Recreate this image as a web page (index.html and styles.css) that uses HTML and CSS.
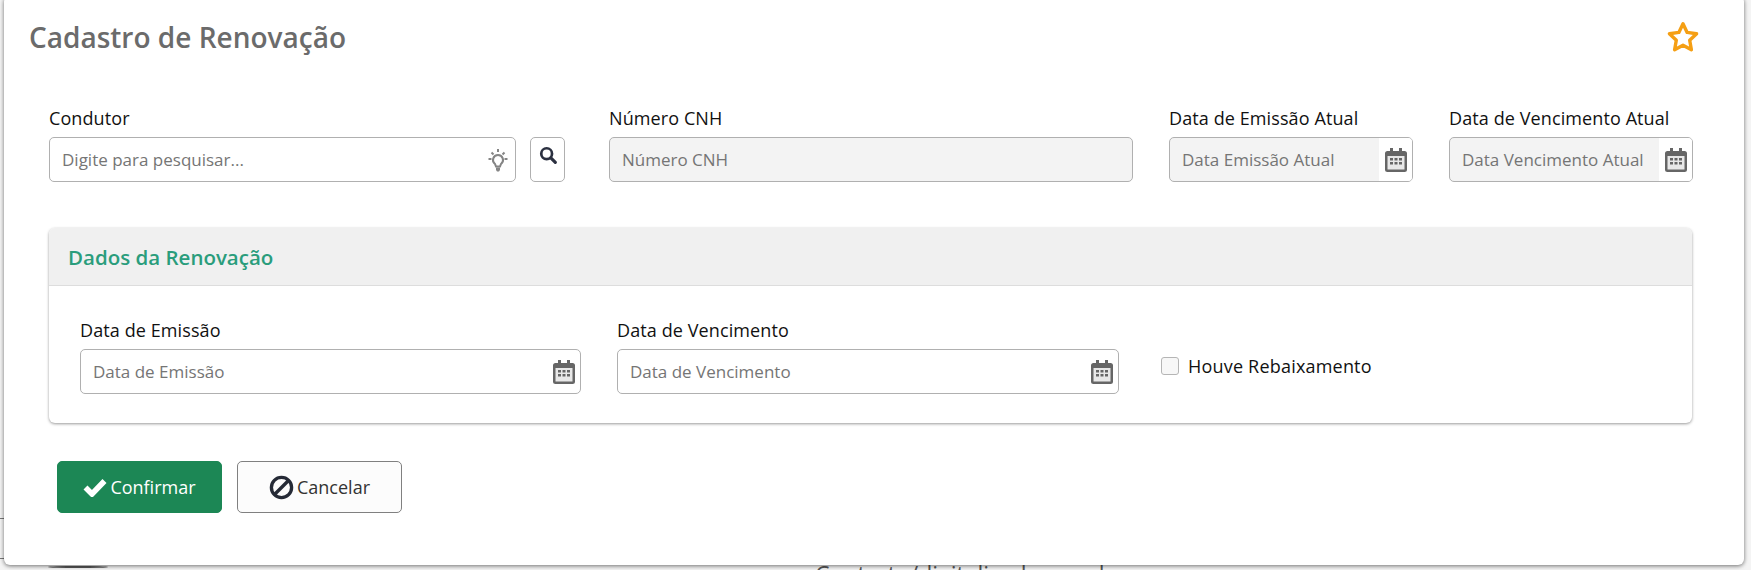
FILE: index.html
```html
<!DOCTYPE html>
<html lang="pt-BR">
<head>
<meta charset="utf-8">
<title>Cadastro de Renovação</title>
<link rel="stylesheet" href="styles.css">
</head>
<body>
<div class="backdrop">Contrato/digitalizado.com.br</div>
<span class="mark mark-a"></span>
<span class="mark mark-b"></span>
<span class="mark mark-c"></span>
<main class="modal">
  <header class="modal-head">
    <h1 class="modal-title">Cadastro de Renovação</h1>
    <svg class="star" viewBox="0 0 32 32"><path d="M16 3.500l3.900 8.200 8.900 1.200-6.500 6.200 1.600 8.900-7.900-4.300-7.900 4.300 1.600-8.900-6.500-6.200 8.900-1.200z" fill="none" stroke="#f59f14" stroke-width="3.200" stroke-linejoin="round"/></svg>
  </header>
  <section class="top-row">
    <div class="field f-cond">
      <label class="label">Condutor</label>
      <div class="cond-line">
        <div class="input grow">
          <span class="ph">Digite para pesquisar...</span>
          <svg class="bulb" viewBox="0 0 24 24"><g fill="none" stroke="#858585" stroke-width="2"><path d="M12 7a5 5 0 0 0-3 9l1 2.500h4l1-2.500a5 5 0 0 0-3-9z"/><path d="M12 1v3M2.500 11h3M18.500 11h3M5.500 4.500l2 2M18.500 4.500l-2 2"/></g><path d="M10 19.500h4V22l-1 1.500h-2L10 22z" fill="#858585"/></svg>
        </div>
        <button class="search-btn" type="button"><svg viewBox="0 0 16 16"><circle cx="6.800" cy="6.800" r="4.800" fill="none" stroke="#2b3040" stroke-width="2.400"/><path d="M10.500 10.500l4 4" stroke="#2b3040" stroke-width="2.800" stroke-linecap="round"/></svg></button>
      </div>
    </div>
    <div class="field f-cnh">
      <label class="label">Número CNH</label>
      <div class="input disabled"><span class="ph">Número CNH</span></div>
    </div>
    <div class="field f-date">
      <label class="label">Data de Emissão Atual</label>
      <div class="input disabled date"><span class="ph">Data Emissão Atual</span><span class="addon"><svg class="cal" viewBox="0 0 22 24"><use href="#cal"/></svg></span></div>
    </div>
    <div class="field f-date">
      <label class="label">Data de Vencimento Atual</label>
      <div class="input disabled date"><span class="ph">Data Vencimento Atual</span><span class="addon"><svg class="cal" viewBox="0 0 22 24"><use href="#cal"/></svg></span></div>
    </div>
  </section>
  <section class="panel">
    <h2 class="panel-head">Dados da Renovação</h2>
    <div class="panel-body">
      <div class="field f-em">
        <label class="label">Data de Emissão</label>
        <div class="input"><span class="ph">Data de Emissão</span><svg class="cal" viewBox="0 0 22 24"><use href="#cal"/></svg></div>
      </div>
      <div class="field f-ve">
        <label class="label">Data de Vencimento</label>
        <div class="input"><span class="ph">Data de Vencimento</span><svg class="cal" viewBox="0 0 22 24"><use href="#cal"/></svg></div>
      </div>
      <div class="check"><span class="box"></span><span>Houve Rebaixamento</span></div>
    </div>
  </section>
  <footer class="actions">
    <button class="btn primary" type="button"><svg class="ic-check" viewBox="0 0 24 20"><path d="M2.500 10.500l6.500 6.500L21.500 4" fill="none" stroke="#fff" stroke-width="5.600"/></svg>Confirmar</button>
    <button class="btn ghost" type="button"><svg class="ic-ban" viewBox="0 0 24 24"><circle cx="12" cy="12" r="9.700" fill="none" stroke="#252a36" stroke-width="3.200"/><path d="M5.500 18.500l13-13" stroke="#252a36" stroke-width="3.200"/></svg>Cancelar</button>
  </footer>
</main>
<svg class="defs" width="0" height="0"><defs><g id="cal"><path d="M5 0h3v3h6V0h3v3h2.500A2.500 2.500 0 0 1 22 5.500v16a2.500 2.500 0 0 1-2.500 2.500h-17A2.500 2.500 0 0 1 0 21.500v-16A2.500 2.500 0 0 1 2.500 3H5z" fill="#666"/><rect x="2.500" y="8" width="17" height="13.500" fill="#e8e8e8"/><g fill="#666"><rect x="5" y="10" width="3" height="2.500"/><rect x="9.500" y="10" width="3" height="2.500"/><rect x="14" y="10" width="3" height="2.500"/><rect x="5" y="14" width="3" height="2.500"/><rect x="9.500" y="14" width="3" height="2.500"/><rect x="14" y="14" width="3" height="2.500"/></g></g></defs></svg>
</body>
</html>
```
FILE: styles.css
```css
* { box-sizing: border-box; }
html, body { margin: 0; height: 570px; overflow: hidden; }
body { background: #f4f4f4; font-family: "Open Sans", "Noto Sans", sans-serif; color: #111; position: relative; width: 1751px; }
.backdrop { position: absolute; left: 815px; top: 559px; font-size: 23px; color: #555; line-height: 30px; }
.mark { position: absolute; background: #777; }
.mark-a { left: 0; top: 518px; width: 4px; height: 1px; }
.mark-b { left: 0; top: 558px; width: 4px; height: 1px; }
.mark-c { left: 48px; top: 566px; width: 60px; height: 2px; border-radius: 50%; background: #555; }
.modal { position: absolute; left: 4px; top: -4px; width: 1740px; height: 569px; background: #fff; border-radius: 6px; box-shadow: 0 1px 4px rgba(0,0,0,.55); padding: 4px 0 0 45px; }
.modal-head { display: flex; align-items: center; justify-content: space-between; height: 74px; margin-left: -20px; padding-right: 44px; }
.modal-title { margin: 0; font-size: 28px; font-weight: 600; color: #6b6b6b; }
.star { width: 34px; height: 34px; }
.top-row { display: flex; margin-top: 33px; }
.field { display: flex; flex-direction: column; }
.label { font-size: 18px; line-height: 22px; margin-bottom: 8px; color: #111; letter-spacing: .1px; white-space: nowrap; }
.f-cond { width: 516px; margin-right: 44px; }
.f-cnh { width: 524px; margin-right: 36px; }
.f-date { width: 244px; margin-right: 36px; }
.f-date:last-child { margin-right: 0; }
.cond-line { display: flex; gap: 14px; }
.grow { flex: 1; }
.input { height: 45px; border: 1px solid #b0b0b0; border-radius: 5px; display: flex; align-items: center; justify-content: space-between; padding: 0 5px 0 12px; background: #fff; overflow: hidden; }
.ph { font-size: 17px; color: #757575; white-space: nowrap; }
.disabled { background: #f3f3f3; }
.date { padding-right: 0; }
.addon { width: 33px; align-self: stretch; background: #fff; display: flex; align-items: center; justify-content: center; flex: none; }
.cal { width: 22px; height: 24px; flex: none; }
.bulb { width: 24px; height: 24px; }
.search-btn { width: 35px; height: 45px; border: 1px solid #b0b0b0; border-radius: 5px; background: #fff; padding: 8px 0 0; display: flex; justify-content: center; align-items: flex-start; flex: none; }
.search-btn svg { width: 18px; height: 18px; }
.panel { width: 1643px; height: 195px; margin-top: 46px; border-radius: 6px; box-shadow: 0 1px 3px rgba(0,0,0,.4); background: #fff; }
.panel-head { margin: 0; height: 58px; padding-left: 19px; display: flex; align-items: center; background: #f0f0f0; border-bottom: 1px solid #ddd; border-radius: 6px 6px 0 0; font-size: 20.500px; font-weight: 600; color: #2a9d7c; }
.panel-body { display: flex; padding: 33px 0 0 31px; }
.f-em { width: 501px; margin-right: 36px; }
.f-ve { width: 502px; margin-right: 42px; }
.check { display: flex; align-items: center; gap: 9px; height: 18px; margin-top: 38px; font-size: 18px; letter-spacing: .2px; }
.box { width: 18px; height: 18px; border: 1px solid #b5b5b5; border-radius: 3px; background: #f7f7f7; }
.actions { display: flex; gap: 15px; margin: 38px 0 0 8px; }
.btn { width: 165px; height: 52px; border-radius: 5px; font: 18px "Open Sans", sans-serif; display: flex; align-items: center; justify-content: center; gap: 3px; padding: 0; }
.primary { background: #1c8755; border: 1px solid #1c8755; color: #fff; }
.ghost { background: #fcfcfc; border: 1px solid #808080; color: #333; }
.ic-check { width: 24px; height: 20px; }
.ic-ban { width: 25px; height: 25px; }
.defs { position: absolute; }
```
